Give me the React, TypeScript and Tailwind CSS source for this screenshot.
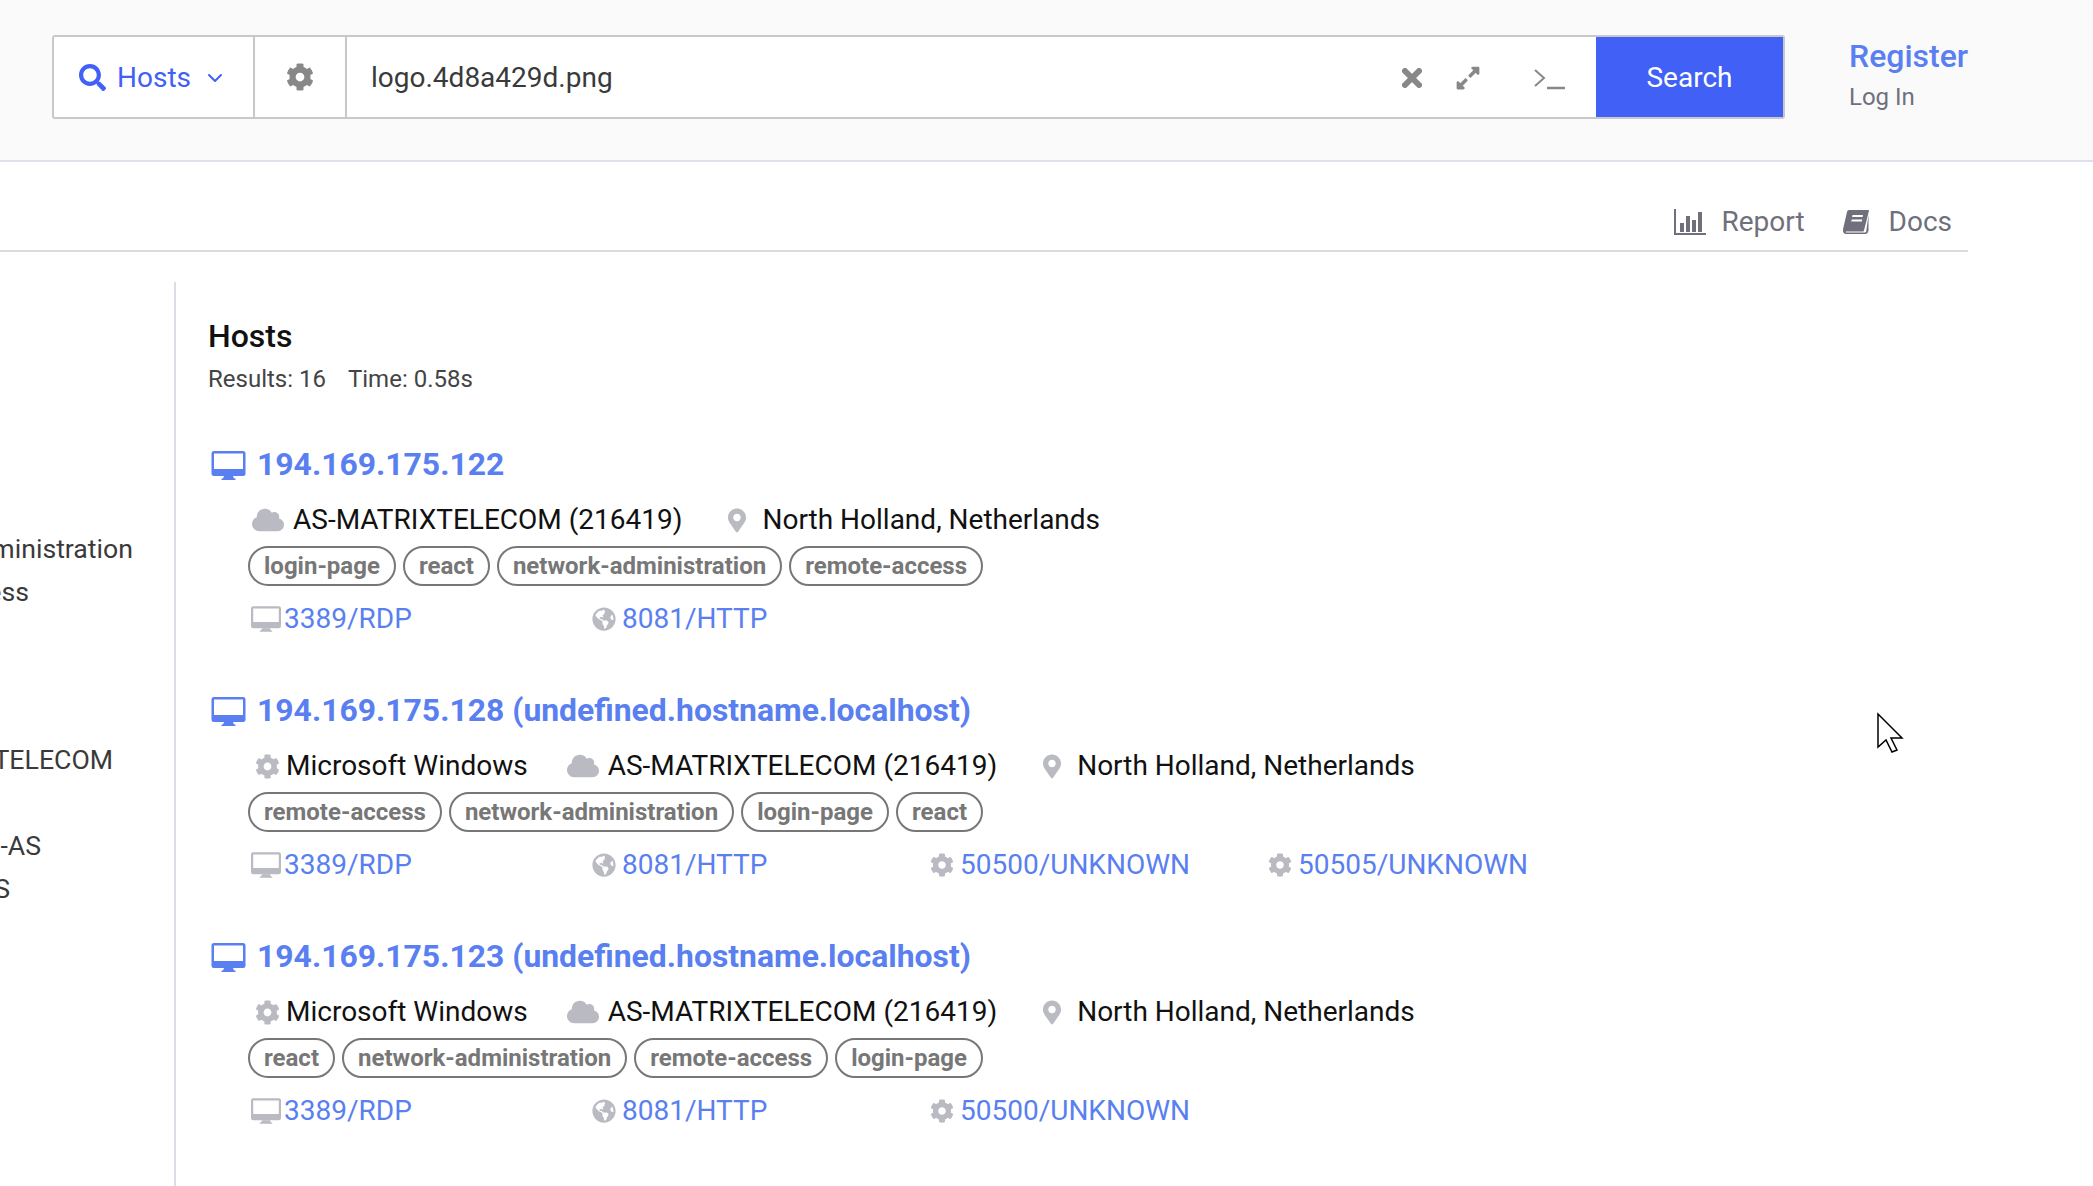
import React from 'react';
import { ChevronDown } from 'lucide-react';
import { FaCloud, FaCog, FaExpandAlt, FaGlobeAmericas, FaMapMarkerAlt, FaSearch } from 'react-icons/fa';

interface Port {
  label: string;
  kind: 'rdp' | 'http' | 'other';
}

interface Host {
  title: string;
  os?: boolean;
  tags: string[];
  ports: Port[];
}

const hosts: Host[] = [
  {
    title: '194.169.175.122',
    tags: ['login-page', 'react', 'network-administration', 'remote-access'],
    ports: [
      { label: '3389/RDP', kind: 'rdp' },
      { label: '8081/HTTP', kind: 'http' },
    ],
  },
  {
    title: '194.169.175.128 (undefined.hostname.localhost)',
    os: true,
    tags: ['remote-access', 'network-administration', 'login-page', 'react'],
    ports: [
      { label: '3389/RDP', kind: 'rdp' },
      { label: '8081/HTTP', kind: 'http' },
      { label: '50500/UNKNOWN', kind: 'other' },
      { label: '50505/UNKNOWN', kind: 'other' },
    ],
  },
  {
    title: '194.169.175.123 (undefined.hostname.localhost)',
    os: true,
    tags: ['react', 'network-administration', 'remote-access', 'login-page'],
    ports: [
      { label: '3389/RDP', kind: 'rdp' },
      { label: '8081/HTTP', kind: 'http' },
      { label: '50500/UNKNOWN', kind: 'other' },
    ],
  },
];

// thick-chinned monitor, FaDesktop has a different stand
const Monitor = ({ className }: { className: string }) => (
  <svg className={className} viewBox="0 0 34 29" fill="currentColor">
    <path
      fillRule="evenodd"
      d="M2.5 0h29A2.5 2.5 0 0 1 34 2.5v20a2.5 2.5 0 0 1-2.5 2.5h-29A2.5 2.5 0 0 1 0 22.5v-20A2.5 2.5 0 0 1 2.5 0zM2.5 2.5v15.5h29V2.5z"
    />
    <path d="M12.5 25h9l1 2.5h1.500V29H10v-1.500h1.500z" />
  </svg>
);

const PortIcon = ({ kind }: { kind: Port['kind'] }) => {
  if (kind === 'rdp') return <Monitor className="w-[30px] h-[26px] ml-[1px] mr-[3px] text-[#b9bac2] shrink-0" />;
  if (kind === 'http') return <FaGlobeAmericas className="w-[24px] h-[24px] ml-[4px] mr-[6px] text-[#b9bac2] shrink-0" />;
  return <FaCog className="w-[24px] h-[24px] ml-[4px] mr-[6px] text-[#b9bac2] shrink-0" />;
};

const HostCard = ({ host }: { host: Host }) => (
  <div className="h-[246px]">
    <div className="flex items-center h-[44px] text-[31.9px] font-bold text-[#5a7ff0]">
      <Monitor className="w-[35px] h-[29px] ml-[3px] mr-[11px] shrink-0" />
      <span className="whitespace-nowrap">{host.title}</span>
    </div>
    <div className="flex items-center h-[44px] mt-[11px] text-[28px] text-[#111]">
      {host.os && (
        <>
          <FaCog className="w-[25px] h-[25px] ml-[47px] mr-[6px] text-[#b9bac2] shrink-0" />
          <span className="mr-[39px]">Microsoft Windows</span>
        </>
      )}
      <FaCloud className={`w-[32px] h-[26px] mr-[9px] text-[#b9bac2] shrink-0 ${host.os ? '' : 'ml-[44px]'}`} />
      <span className="mr-[46px]">AS-MATRIXTELECOM (216419)</span>
      <FaMapMarkerAlt className="w-[18px] h-[25px] mr-[16px] text-[#b9bac2] shrink-0" />
      <span>North Holland, Netherlands</span>
    </div>
    <div className="flex gap-[7px] h-[40px] mt-[4px] ml-[40px]">
      {host.tags.map((tag) => (
        <span key={tag} className="flex items-center h-[40px] px-[14px] rounded-full border-2 border-[#777] text-[24px] font-bold text-[#777]">
          {tag}
        </span>
      ))}
    </div>
    <div className="flex mt-[11px] ml-[42px] h-[44px] items-center text-[28px] text-[#5a7ff0]">
      {host.ports.map((port) => (
        <div key={port.label} className="flex items-center w-[338px]">
          <PortIcon kind={port.kind} />
          <span className="whitespace-nowrap">{port.label}</span>
        </div>
      ))}
    </div>
  </div>
);

// the facet list is scrolled off to the left: only the ends of the names show
const Facet = ({ name, end, className = '' }: { name: string; end: string; className?: string }) => (
  <div className={`flex justify-end whitespace-nowrap h-[43px] leading-[43px] ${end} ${className}`}>
    <span className="shrink-0">{name}</span>
  </div>
);

export default function App() {
  return (
    <div className="relative h-[1186px] overflow-hidden bg-white font-['Roboto',sans-serif]">
      <header className="flex h-[162px] bg-[#fafafa] border-b-2 border-[#e0e0ec] pl-[52px] pt-[35px]">
        <div className="flex w-[1733px] h-[84px] border-2 border-[#c8c8c8] rounded-[3px] bg-white">
          <div className="flex items-center w-[201px] pl-[25px] pt-[1px] text-[#4160f5] text-[28px] border-r-2 border-[#c8c8c8]">
            <FaSearch className="w-[27px] h-[27px] mr-[11px]" />
            <span>Hosts</span>
            <ChevronDown className="w-[24px] h-[24px] ml-[12px]" strokeWidth={2} />
          </div>
          <div className="flex items-center justify-center w-[92px] border-r-2 border-[#c8c8c8]">
            <FaCog className="w-[28px] h-[28px] text-[#888]" />
          </div>
          <div className="flex flex-1 items-center pl-[24px] pt-[1px] text-[28px] text-[#3a3a3a]">
            <span className="flex-1">logo.4d8a429d.png</span>
            <svg className="w-[20px] h-[20px] text-[#888]" viewBox="0 0 20 20" fill="none" stroke="currentColor">
              <path d="M3 3l14 14M17 3L3 17" strokeWidth="6" strokeLinecap="round" />
            </svg>
            <FaExpandAlt className="w-[26px] h-[26px] ml-[33px] text-[#888]" />
            <svg className="w-[32px] h-[26px] ml-[53px] mr-[30px] text-[#888]" viewBox="0 0 32 26" fill="none" stroke="currentColor">
              <path d="M1 5l9 8-9 8" strokeWidth="2" />
              <path d="M13 23h18" strokeWidth="2.500" />
            </svg>
          </div>
          <button className="w-[187px] pt-[1px] bg-[#4160f5] text-white text-[28px]">Search</button>
        </div>
        <div className="ml-[64px] -mt-[1px]">
          <div className="text-[32px] leading-[44px] font-medium text-[#5a7ff0]">Register</div>
          <div className="text-[24px] leading-[38px] text-[#70707c]">Log In</div>
        </div>
      </header>

      <div className="w-[1968px] h-[90px] pt-[31px] border-b-2 border-[#dcdcdc] flex items-center justify-end gap-[38px] pr-[16px] text-[28px] text-[#70707c]">
        <div className="flex items-center">
          <svg className="w-[32px] h-[26px] mr-[15px]" viewBox="0 0 32 26" fill="currentColor">
            <path d="M0 0h2v24h30v2H0z" />
            <path d="M6 14h4v9H6zM12 7h4v16h-4zM18 11h4v12h-4zM24 3h4v20h-4z" />
          </svg>
          <span>Report</span>
        </div>
        <div className="flex items-center">
          {/* slanted book, the packaged ones stand upright */}
          <svg className="w-[26px] h-[24px] mr-[20px]" viewBox="0 0 26 24" fill="currentColor">
            <path
              fillRule="evenodd"
              d="M6 0h19.500c.5 0 .5.5.4 1L21 20.500c-.2.800-.6 1-1.200 1H4c-1.200 0-1.500.5-1 1h19c.5 0 1-.3 1.200-1L25.500 5v15.500C25 23 24 24 22 24H3c-2 0-3-1.500-3-3.500 0-1 .1-1.500.3-2.500L4 2c.3-1.200 1-2 2-2zM9.500 5l-.4 2h10.500l.4-2zM8.700 9.500l-.4 2h10.500l.4-2z"
            />
          </svg>
          <span>Docs</span>
        </div>
      </div>

      <div className="flex mt-[30px]">
        <aside className="w-[176px] h-[904px] shrink-0 border-r-2 border-[#dcdce8] overflow-hidden text-[26.67px] text-[#3a3a3a]">
          <div className="pt-[246px]">
            <Facet name="network-administration" end="w-[133px]" />
            <Facet name="remote-access" end="w-[29px]" />
            <Facet name="AS-MATRIXTELECOM" end="w-[113px]" className="mt-[125px]" />
            <Facet name="AKAMAI-AS" end="w-[41px]" className="mt-[43px]" />
            <Facet name="HOSTING SERVICES" end="w-[10px]" />
          </div>
        </aside>
        <main className="pl-[32px] flex-1">
          <h2 className="text-[32px] leading-[40px] mt-[34px] font-medium text-[#111]">Hosts</h2>
          <div className="flex gap-[22px] mt-[6px] text-[24px] leading-[34px] text-[#444]">
            <span>Results: 16</span>
            <span>Time: 0.58s</span>
          </div>
          <div className="mt-[47px]">
            {hosts.map((host) => (
              <HostCard key={host.title} host={host} />
            ))}
          </div>
        </main>
      </div>

      {/* mouse pointer */}
      <svg className="absolute left-[1876px] top-[712px] w-[28px] h-[42px]" viewBox="0 0 28 42" fill="white" stroke="black" strokeWidth="1.5">
        <path d="M2 2v33l8-7 6 12 5-2-6-12h11z" />
      </svg>
    </div>
  );
}
